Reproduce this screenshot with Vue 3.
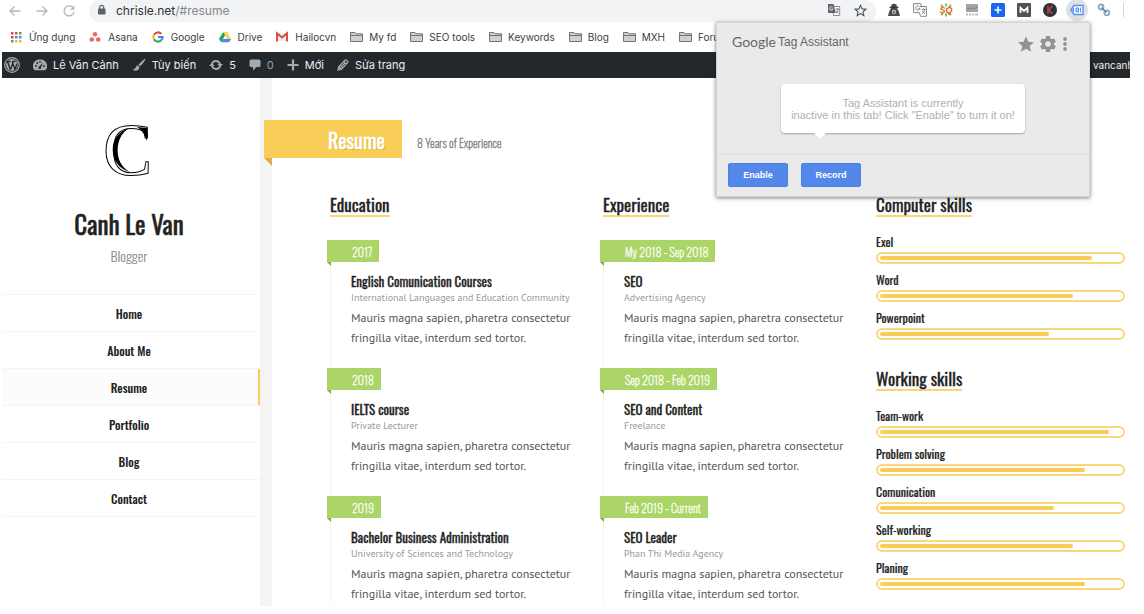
<script setup>
const bookmarks = [
  { icon: 'apps', label: 'Ứng dụng' },
  { icon: 'asana', label: 'Asana' },
  { icon: 'google', label: 'Google' },
  { icon: 'drive', label: 'Drive' },
  { icon: 'gmail', label: 'Hailocvn' },
  { icon: 'folder', label: 'My fd' },
  { icon: 'folder', label: 'SEO tools' },
  { icon: 'folder', label: 'Keywords' },
  { icon: 'folder', label: 'Blog' },
  { icon: 'folder', label: 'MXH' },
  { icon: 'folder', label: 'Forum' }
]
const adminItems = [
  { icon: 'gauge', label: 'Lê Văn Cảnh' },
  { icon: 'brush', label: 'Tùy biến' },
  { icon: 'refresh', label: '5' },
  { icon: 'comment', label: '0', dim: true },
  { icon: 'plus', label: 'Mới' },
  { icon: 'pencil', label: 'Sửa trang' }
]
const menu = ['Home', 'About Me', 'Resume', 'Portfolio', 'Blog', 'Contact']
const text = 'Mauris magna sapien, pharetra consectetur fringilla vitae, interdum sed tortor.'
const timelines = [
  {
    title: 'Education',
    entries: [
      { date: '2017', title: 'English Comunication Courses', place: 'International Languages and Education Community' },
      { date: '2018', title: 'IELTS course', place: 'Private Lecturer' },
      { date: '2019', title: 'Bachelor Business Administration', place: 'University of Sciences and Technology' }
    ]
  },
  {
    title: 'Experience',
    entries: [
      { date: 'My 2018 - Sep 2018', title: 'SEO', place: 'Advertising Agency' },
      { date: 'Sep 2018 - Feb 2019', title: 'SEO and Content', place: 'Freelance' },
      { date: 'Feb 2019 - Current', title: 'SEO Leader', place: 'Phan Thi Media Agency' }
    ]
  }
]
const skillGroups = [
  {
    title: 'Computer skills',
    skills: [
      { name: 'Exel', value: 88 },
      { name: 'Word', value: 80 },
      { name: 'Powerpoint', value: 70 }
    ]
  },
  {
    title: 'Working skills',
    skills: [
      { name: 'Team-work', value: 95 },
      { name: 'Problem solving', value: 85 },
      { name: 'Comunication', value: 72 },
      { name: 'Self-working', value: 80 },
      { name: 'Planing', value: 85 }
    ]
  }
]
</script>

<template>
  <div class="page">
    <div class="toolbar">
      <button class="nav-btn" aria-label="Back">
        <svg width="14" height="14" viewBox="0 0 14 14"><path d="M12.5 7H2M6.5 2.5L2 7l4.500 4.500" fill="none" stroke="#b4b6b9" stroke-width="1.300" /></svg>
      </button>
      <button class="nav-btn" aria-label="Forward">
        <svg width="14" height="14" viewBox="0 0 14 14"><path d="M1.500 7H12M7.500 2.500L12 7l-4.500 4.500" fill="none" stroke="#b4b6b9" stroke-width="1.300" /></svg>
      </button>
      <button class="nav-btn" aria-label="Reload">
        <svg width="14" height="14" viewBox="0 0 14 14"><path d="M11.300 4.200A5 5 0 1 0 12 7.800" fill="none" stroke="#b4b6b9" stroke-width="1.300" /><path d="M12.300 1.500v4.300H8z" fill="#b4b6b9" /></svg>
      </button>
      <div class="omnibox">
        <svg width="9" height="12" viewBox="0 0 9 12"><rect x="1" y="4.500" width="7.500" height="6" rx="0.800" fill="#5f6368" /><path d="M2.700 5V3.300a2 2 0 0 1 4 0V5" fill="none" stroke="#5f6368" stroke-width="1.200" /></svg>
        <span class="url">chrisle.net<span class="path">/#resume</span></span>
        <svg class="push" width="14" height="14" viewBox="0 0 14 14"><path d="M5.500 3.500h7.200v9H6.500z" fill="#fff" stroke="#8a8d90" /><path d="M1 1h5.500l2.300 9H1z" fill="#5f6368" /><path d="M5.600 4.200A1.800 1.800 0 1 0 6 6H4.400" fill="none" stroke="#fff" stroke-width=".8" /><path d="M8.600 6.200h3.500M10.300 5v1.200M11.500 6.200c-.4 1.800-1.300 3-2.500 4M9 7.500c.7 1.400 1.500 2 2.700 2.600" fill="none" stroke="#6c6f73" stroke-width=".8" /></svg>
        <svg width="13" height="13" viewBox="0 0 24 24"><path d="M12 2.500l2.900 6.500 7 .6-5.300 4.700 1.600 7-6.200-3.700-6.200 3.700 1.600-7L2.100 9.600l7-.6z" fill="none" stroke="#4f5256" stroke-width="2" /></svg>
      </div>
      <div class="extensions">
        <svg width="14" height="14" viewBox="0 0 14 14"><path d="M4.500 1.500Q7-.2 9.500 1.500L10 5l2 4 1 4H1l1-4 2-4z" fill="#4a4a4a" /><path d="M2.500 4.300h9" stroke="#333" stroke-width="1.200" /><circle cx="7" cy="9" r="2.200" fill="#bbb" /><path d="M6.200 8.500h1.600v1.800H6.200z" fill="#444" /></svg>
        <svg width="14" height="14" viewBox="0 0 14 14"><path d="M.6.600h7.200l2 9H.6z" fill="#fff" stroke="#85888c" /><path d="M7 3.500h6.400v9.800H7.500L6.500 10" fill="#fff" stroke="#85888c" /><path d="M6.500 3.500A2.200 2.200 0 1 0 7 5.300H5M8.500 6.500h4M10.500 5.300v1.200M12 6.500c-.5 2-1.500 3.200-3 4.300M9.200 7.800c.7 1.300 1.500 2 2.800 2.700" fill="none" stroke="#777a7e" stroke-width=".9" /></svg>
        <svg width="14" height="14" viewBox="0 0 14 14"><path d="M7 .5v3M2 2l2 2M12 2l-2 2M2 12l2-2M12 12l-2-2M7 13.500v-3" stroke="#7fbb3c" stroke-width="1.800" /><text x="7" y="10" text-anchor="middle" class="sq">SQ</text></svg>
        <svg width="14" height="14" viewBox="0 0 14 14"><path d="M1 1h12v8H1z" fill="#a5a5a5" /><path d="M1.500 5l3 1 3-1 2 .5 3-1.500" stroke="#777" fill="none" stroke-width=".8" /><path d="M1 11.500h2M4 11.500h2M7 11.500h2M10 11.500h3" stroke="#bbb" stroke-width="2" /></svg>
        <svg width="14" height="14" viewBox="0 0 14 14"><rect width="14" height="14" rx="1.500" fill="#1668f2" /><path d="M7 3.500v7M3.500 7h7" stroke="#fff" stroke-width="1.600" /></svg>
        <svg width="14" height="14" viewBox="0 0 14 14"><rect width="14" height="14" rx="1" fill="#505352" /><path d="M3.500 10V4.800L7 8l3.500-3.200V10" fill="none" stroke="#fff" stroke-width="1.700" /></svg>
        <svg width="14" height="14" viewBox="0 0 14 14"><circle cx="7" cy="7" r="7" fill="#29323d" /><path d="M5 3v8M9.500 3L5.800 7l3.700 4" fill="none" stroke="#b9453a" stroke-width="1.700" /></svg>
        <span class="active-ext">
          <svg width="14" height="12" viewBox="0 0 14 12"><path d="M.8 6L4 1.500h9v9H4z" fill="#fff" stroke="#5790f3" stroke-width="1.400" /><path d="M4 3l-2 3 2 3z" fill="#5790f3" /><path d="M6 4h2.500v4H6zM10.500 3.500v5M6 6h2" fill="none" stroke="#5790f3" /></svg>
        </span>
        <svg width="14" height="14" viewBox="0 0 14 14"><g fill="none" stroke="#87a9c7" stroke-width="1.800"><circle cx="4" cy="4" r="2.500" /><circle cx="9.800" cy="9.800" r="2.500" /></g><path d="M4.500 4.500l5 5" stroke="#5c7fa0" stroke-width="1.500" /></svg>
        <span class="divider"></span>
      </div>
    </div>

    <nav class="bookmarks" aria-label="Bookmarks">
      <a v-for="b in bookmarks" :key="b.label" href="#" :class="b.icon">
        <svg v-if="b.icon === 'apps'" width="12" height="12" viewBox="0 0 12 12">
          <path d="M1 1h2.500v2.500H1zM5 1h2.500v2.500H5zM1 5h2.500v2.500H1z" fill="#e2463a" /><path d="M9 1h2.500v2.500H9zM1 9h2.500v2.500H1z" fill="#43a35a" /><path d="M5 5h2.500v2.500H5zM9 5h2.500v2.500H9z" fill="#4a87ee" /><path d="M5 9h2.500v2.500H5zM9 9h2.500v2.500H9z" fill="#efb62e" />
        </svg>
        <svg v-else-if="b.icon === 'asana'" width="12" height="12" viewBox="0 0 12 12"><g fill="#ee6a68"><circle cx="6" cy="3.300" r="2.300" /><circle cx="2.800" cy="8.500" r="2.300" /><circle cx="9.200" cy="8.500" r="2.300" /></g></svg>
        <svg v-else-if="b.icon === 'google'" width="12" height="12" viewBox="0 0 12 12"><g fill="none" stroke-width="2.100"><path d="M2 3.800A4.600 4.600 0 0 1 9.400 2.900" stroke="#ea4335" /><path d="M2 8.200a4.600 4.600 0 0 1 0-4.400" stroke="#fbbc05" /><path d="M9.200 9.300A4.600 4.600 0 0 1 2 8.200" stroke="#34a853" /><path d="M6 6h4.600a4.600 4.600 0 0 1-1.400 3.300" stroke="#4285f4" /></g></svg>
        <svg v-else-if="b.icon === 'drive'" width="12" height="12" viewBox="0 0 12 12"><path d="M4.200 1L0 8l2 3.200L6.200 4.200z" fill="#1fa463" /><path d="M4.200 1h3.900L12 8H8.200z" fill="#fdd04b" /><path d="M4 8h8l-2 3.200H2z" fill="#4688f4" /></svg>
        <svg v-else-if="b.icon === 'gmail'" width="12" height="12" viewBox="0 0 12 12"><path d="M1 2h10v8H1z" fill="#eee" /><path d="M1 10.500V2.300L6 6.500l5-4.200v8.200" fill="none" stroke="#d54b3d" stroke-width="1.900" /></svg>
        <svg v-else width="13" height="12" viewBox="0 0 13 12"><path d="M.5 10.500V1.500h4.500l1 1.300h6.500v7.700z" fill="#d0d0d0" stroke="#707274" /><path d="M1 4.500h11" stroke="#707274" /></svg>
        <span>{{ b.label }}</span>
      </a>
    </nav>

    <div class="adminbar">
      <svg class="wp" width="16" height="16" viewBox="0 0 16 16"><circle cx="8" cy="8" r="7.300" fill="none" stroke="#a5aaaf" stroke-width="1.200" /><circle cx="8" cy="8" r="5.900" fill="#a5aaaf" /><path d="M2.500 4.500h4M8 4.500h3.500M3.600 4.800l2.800 8M6.400 12.800l2.200-6M8.200 4.800l2.800 8M11 12.800l1.800-6" fill="none" stroke="#23282d" stroke-width="1.300" /></svg>
      <a v-for="a in adminItems" :key="a.label" href="#" :class="{ dim: a.dim }">
        <svg v-if="a.icon === 'gauge'" width="14" height="12" viewBox="0 0 14 12"><path d="M7 .5a6.500 6.500 0 0 0-5.400 10.800h10.800A6.500 6.500 0 0 0 7 .5z" fill="#a5aaaf" /><g fill="#23282d"><circle cx="3" cy="7" r=".9" /><circle cx="4.300" cy="4" r=".9" /><circle cx="7" cy="2.800" r=".9" /><circle cx="11" cy="7" r=".9" /><path d="M10 3.300L8 8.500a1.300 1.300 0 1 1-1.600-1z" /></g></svg>
        <svg v-else-if="a.icon === 'brush'" width="14" height="14" viewBox="0 0 14 14"><path d="M13.500.5c-1 0-5.500 4.300-7 6.300l1.500 1.500c2-1.700 6-6.500 5.500-7.800zM6 7.500C4 7.300 4 9.500 2.800 10.700c-.7.700-1.500 1-2.300 1 2 1.800 6.500 1.500 7-2.500z" fill="#a5aaaf" /></svg>
        <svg v-else-if="a.icon === 'refresh'" width="14" height="12" viewBox="0 0 14 12"><path d="M3 4.500A4.300 4.300 0 0 1 11 5M11 7.500A4.300 4.300 0 0 1 3 7" fill="none" stroke="#a5aaaf" stroke-width="1.900" /><path d="M8.300 5H14l-2.900 3.300zM0 7h5.700L2.900 3.700z" fill="#a5aaaf" /></svg>
        <svg v-else-if="a.icon === 'comment'" width="12" height="12" viewBox="0 0 12 12"><path d="M2 .5h8q1.500 0 1.500 1.500v4.500Q11.500 8 10 8H7.500L4 11.500V8H2Q.5 8 .5 6.500V2Q.5.500 2 .5z" fill="#a5aaaf" /></svg>
        <svg v-else-if="a.icon === 'plus'" width="12" height="12" viewBox="0 0 12 12"><path d="M6 .5v11M.5 6h11" stroke="#a5aaaf" stroke-width="2.200" /></svg>
        <svg v-else width="12" height="12" viewBox="0 0 12 12"><path d="M1 11l.8-3.500L8 1.300q1-.7 2 .3l.5.500q.8 1 0 1.800L4.500 10.200zM7 2.500L9.500 5M2 8l2 2M3.500 8.500l4.500-4.500" fill="none" stroke="#a5aaaf" stroke-width="1.300" /></svg>
        <span>{{ a.label }}</span>
      </a>
      <span class="account">vancanh</span>
    </div>

    <div class="body">
      <aside class="sidebar">
        <svg class="logo" width="52" height="86" viewBox="0 -14 52 86" role="img" aria-label="C">
          <text x="0" y="54" class="logo-letter">C</text>
          <path d="M27 7C4 12 4 45 27 51C10 43 11 14 27 7z" fill="#000" />
          <path d="M34 6L44 7V20C42 14 39 9 34 6z" fill="#000" />
        </svg>
        <h1>Canh Le Van</h1>
        <p class="job">Blogger</p>
        <nav class="menu" aria-label="Main">
          <a v-for="m in menu" :key="m" href="#" :class="{ active: m === 'Resume' }">{{ m }}</a>
        </nav>
      </aside>
      <div class="gutter"></div>
      <main>
        <header class="heading">
          <h2 class="ribbon">Resume</h2>
          <span class="years">8 Years of Experience</span>
        </header>
        <div class="columns">
          <section v-for="t in timelines" :key="t.title">
            <h3>{{ t.title }}</h3>
            <div class="timeline">
              <article v-for="e in t.entries" :key="e.date">
                <span class="date">{{ e.date }}</span>
                <h4>{{ e.title }}</h4>
                <p class="place">{{ e.place }}</p>
                <p class="desc">{{ text }}</p>
              </article>
            </div>
          </section>
          <div class="skills">
            <section v-for="g in skillGroups" :key="g.title">
              <h3>{{ g.title }}</h3>
              <div v-for="s in g.skills" :key="s.name" class="skill">
                <span class="skill-name">{{ s.name }}</span>
                <div class="track" role="progressbar" :aria-label="s.name" :aria-valuenow="s.value">
                  <div class="fill" :style="{ width: s.value + '%' }"></div>
                </div>
              </div>
            </section>
          </div>
        </div>
      </main>
    </div>

    <div class="popup" role="dialog" aria-label="Google Tag Assistant">
      <div class="popup-head">
        <span class="brand">Google</span>
        <span class="product">Tag Assistant</span>
        <div class="popup-icons">
          <svg width="16" height="16" viewBox="0 0 24 24"><path d="M12 0.500l3.500 8 8.500.800-6.400 5.700 1.900 8.500L12 19l-7.500 4.500 1.900-8.500L0 9.300l8.500-.8z" fill="#929292" /></svg>
          <svg width="16" height="16" viewBox="2 2 20 20"><path fill="#929292" d="M19.430 12.980c.04-.32.070-.64.070-.98s-.03-.66-.07-.98l2.110-1.650c.19-.15.240-.42.120-.64l-2-3.460c-.12-.22-.39-.3-.61-.22l-2.490 1c-.52-.4-1.080-.73-1.690-.98l-.38-2.650C14.460 2.180 14.250 2 14 2h-4c-.25 0-.46.180-.49.420l-.38 2.650c-.61.250-1.170.59-1.690.98l-2.490-1c-.23-.09-.49 0-.61.220l-2 3.460c-.13.220-.07.490.120.640l2.110 1.650c-.04.320-.07.650-.07.980s.03.660.07.980l-2.110 1.650c-.19.150-.24.420-.12.640l2 3.460c.12.220.39.300.61.220l2.490-1c.52.400 1.080.73 1.690.98l.38 2.650c.03.240.24.420.49.420h4c.25 0 .46-.18.490-.42l.38-2.650c.61-.25 1.170-.59 1.690-.98l2.490 1c.23.090.49 0 .61-.22l2-3.460c.12-.22.070-.49-.12-.64l-2.110-1.650zM12 15.500a3.500 3.500 0 1 1 0-7 3.500 3.500 0 0 1 0 7z" /></svg>
          <svg width="6" height="16" viewBox="0 0 6 16"><g fill="#929292"><circle cx="3" cy="3" r="1.900" /><circle cx="3" cy="8" r="1.900" /><circle cx="3" cy="13" r="1.900" /></g></svg>
        </div>
      </div>
      <div class="popup-body">
        <p class="bubble">Tag Assistant is currently<br />inactive in this tab! Click "Enable" to turn it on!</p>
      </div>
      <div class="popup-foot">
        <button>Enable</button>
        <button>Record</button>
      </div>
    </div>
  </div>
</template>

<style>
body {
  background: #fff;
}
</style>

<style scoped>
.page {
  --narrow: Oswald, "Liberation Sans Narrow", "Roboto Condensed", "Liberation Sans", sans-serif;
  --text: "PT Sans", "Noto Sans", sans-serif;
  position: relative;
  display: flex;
  flex-direction: column;
  box-sizing: border-box;
  min-height: 100vh;
  padding: 0 14px 8px 2px;
  overflow: hidden;
  font-family: Inter, sans-serif;
  font-size: 11px;
  color: #3c4043;
}
* {
  box-sizing: border-box;
}
h1, h2, h3, h4, p {
  margin: 0;
  font-weight: 400;
}
a {
  color: inherit;
  text-decoration: none;
}
button {
  border: 0;
  padding: 0;
  background: none;
}
svg {
  display: block;
  flex: none;
}
.toolbar {
  display: flex;
  align-items: center;
  height: 22px;
  padding-left: 6px;
}
.nav-btn {
  width: 27px;
  height: 20px;
}
.omnibox {
  display: flex;
  align-items: center;
  flex: 1;
  gap: 10px;
  height: 22px;
  padding: 0 9px 2px 8px;
  border-radius: 11px;
  background: #f1f3f4;
}
.url {
  font-size: 12px;
  color: #303236;
}
.path {
  color: #85888c;
}
.push {
  margin-left: auto;
  margin-right: 3px;
}
.extensions {
  display: flex;
  align-items: center;
  gap: 12px;
  padding: 0 6px 2px 11px;
}
.sq {
  font: italic bold 9px "Liberation Sans", sans-serif;
  fill: #ee5a1c;
}
.active-ext {
  display: flex;
  align-items: center;
  justify-content: center;
  width: 22px;
  height: 22px;
  margin: 0 -3px 0 -3px;
  border-radius: 50%;
  background: #dfe0e2;
}
.divider {
  width: 1px;
  height: 14px;
  background: #d4d6d8;
}
.bookmarks {
  display: flex;
  gap: 14px;
  height: 30px;
  padding-left: 8px;
  overflow: hidden;
  font-size: 10px;
}
.bookmarks a,
.adminbar a {
  display: flex;
  align-items: center;
  gap: 7px;
  white-space: nowrap;
}
.bookmarks .folder {
  gap: 6px;
}
.adminbar {
  display: flex;
  align-items: center;
  gap: 13px;
  height: 26px;
  padding-left: 2px;
  overflow: hidden;
  background: #23282d;
  color: #eee;
}
.adminbar a {
  gap: 6px;
}
.adminbar .dim {
  color: #9ca1a6;
}
.account {
  width: 37px;
  margin-left: auto;
  overflow: hidden;
  font-size: 10px;
}
.body {
  display: grid;
  grid-template-columns: 258px 12px 1fr;
  flex: 1;
}
.gutter {
  background: #f4f4f4;
}
.sidebar {
  padding-top: 29px;
  text-align: center;
  font-family: var(--narrow);
  color: #222;
}
.sidebar h1,
.job,
.menu a {
  padding-right: 4px;
}
.logo {
  margin: 0 auto;
  padding-right: 4px;
  box-sizing: content-box;
}
.logo-letter {
  font: 74px "Liberation Serif", serif;
  fill: #fff;
  stroke: #000;
  stroke-width: 1px;
}
h1 {
  margin-top: 11px;
  font-size: 25px;
  line-height: 40px;
  -webkit-text-stroke: 0.500px;
}
.job {
  font-size: 14px;
  font-weight: 300;
  line-height: 24px;
  color: #888;
}
.menu {
  margin-top: 26px;
  border-top: 1px solid #f5f5f5;
}
.menu a {
  display: block;
  height: 37px;
  border-bottom: 1px solid #f5f5f5;
  font-size: 12px;
  font-weight: 500;
  line-height: 38px;
}
.menu .active {
  padding-left: 2px;
  border-right: 2px solid #f9ce58;
  background: #fcfcfc;
}
main {
  padding: 42px 5px 0 58px;
}
.heading {
  display: flex;
  align-items: center;
  gap: 15px;
  margin-left: -66px;
}
.ribbon {
  position: relative;
  height: 38px;
  padding: 0 17px 0 64px;
  background: #f9ce58;
  color: #fff;
  font-family: var(--narrow);
  font-size: 20px;
  line-height: 40px;
  text-shadow: 1px 1px 1px #d5a93c;
  -webkit-text-stroke: 0.500px;
}
.ribbon::after,
.date::after {
  content: "";
  position: absolute;
  top: 100%;
  left: 0;
  border-style: solid;
  border-width: 0 8px 8px 0;
  border-color: transparent #d9b04a transparent transparent;
}
.years {
  margin-top: 6px;
  font-family: var(--narrow);
  font-size: 12px;
  font-weight: 200;
  color: #777;
  -webkit-text-stroke: 0.300px;
}
.columns {
  display: grid;
  grid-template-columns: repeat(3, minmax(0, 1fr));
  gap: 24px;
  margin-top: 34px;
}
h3 {
  width: fit-content;
  height: 25px;
  border-bottom: 2px solid #fad775;
  font-family: var(--narrow);
  font-size: 17px;
  line-height: 25px;
  color: #222;
  -webkit-text-stroke: 0.300px;
}
.timeline {
  margin-top: 23px;
  border-left: 1px solid #f3f5ea;
}
article {
  padding: 0 0 20px 20px;
}
article:last-child {
  padding-bottom: 0;
}
.date {
  position: relative;
  display: block;
  width: fit-content;
  height: 22px;
  margin-left: -24px;
  padding: 0 7px 0 25px;
  background: #abd667;
  color: #fff;
  font-family: var(--narrow);
  font-size: 12px;
  font-weight: 200;
  line-height: 23px;
  -webkit-text-stroke: 0.300px;
}
.date::after {
  border-width: 0 4px 4px 0;
  border-color: transparent #7fb03c transparent transparent;
}
h4 {
  margin-top: 9px;
  font-family: var(--narrow);
  font-size: 13px;
  line-height: 20px;
  color: #222;
  -webkit-text-stroke: 0.300px;
}
.place {
  padding-top: 1px;
  font-family: var(--text);
  font-size: 10px;
  line-height: 12px;
  white-space: nowrap;
  color: #999;
}
.desc {
  font-family: var(--text);
  font-size: 12px;
  line-height: 20px;
  padding-top: 4px;
  color: #555;
}
.skills {
  display: grid;
  align-content: start;
  gap: 20px;
}
.skill {
  height: 38px;
}
h3 + .skill {
  margin-top: 15px;
}
.skill-name {
  display: block;
  height: 20px;
  font-family: var(--narrow);
  font-size: 12px;
  line-height: 20px;
  color: #222;
  -webkit-text-stroke: 0.200px;
}
.track {
  height: 12px;
  padding: 2px;
  border: 2px solid #fbd878;
  border-radius: 6px;
}
.fill {
  height: 4px;
  border-radius: 2px;
  background: #f9cd55;
}
.popup {
  position: absolute;
  top: 22px;
  right: 54px;
  width: 374px;
  background: #eaeaea;
  border: 1px solid #d5d5d5;
  box-shadow: 0 1px 4px rgba(0, 0, 0, 0.500);
  font-family: "Liberation Sans", Arial, sans-serif;
}
.popup-head {
  display: flex;
  align-items: center;
  gap: 2px;
  height: 40px;
  padding: 0 21px 3px 15px;
  color: #666;
}
.brand {
  font-family: Lato, sans-serif;
  font-size: 14px;
}
.product {
  font-size: 12px;
}
.popup-icons {
  display: flex;
  align-items: center;
  gap: 6px;
  margin-left: auto;
  padding-top: 4px;
}
.popup-body {
  padding: 21px 64px 21px 64px;
}
.bubble {
  position: relative;
  padding: 13px 0 12px 0;
  border-radius: 4px;
  background: #fff;
  box-shadow: 0 1px 2px rgba(0, 0, 0, 0.300);
  text-align: center;
  white-space: nowrap;
  line-height: 12px;
  color: #b0b0b0;
}
.bubble::after {
  content: "";
  position: absolute;
  top: 100%;
  left: 33px;
  border: 6px solid transparent;
  border-top-color: #fff;
  border-bottom: 0;
}
.popup-foot {
  display: flex;
  gap: 13px;
  padding: 8px 11px 9px 11px;
  border-top: 1px solid #dedede;
}
.popup-foot button {
  width: 60px;
  height: 24px;
  border: 1px solid #4a80e8;
  border-radius: 2px;
  background: #5388ea;
  color: #fff;
  font: bold 9px "Liberation Sans", Arial, sans-serif;
}
</style>
